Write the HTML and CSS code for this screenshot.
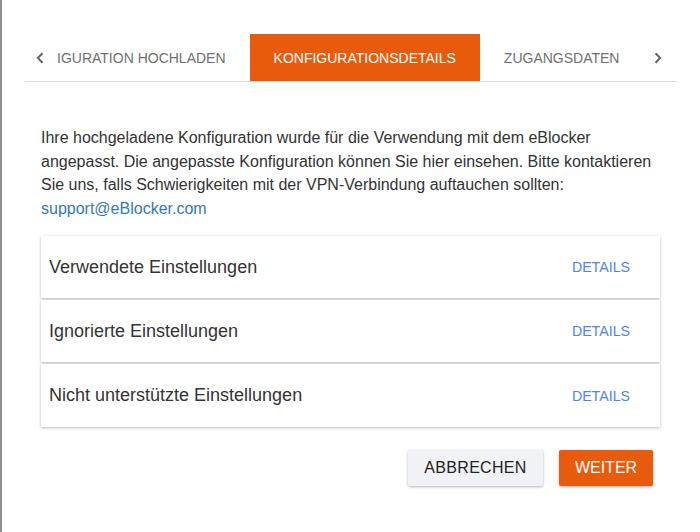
FILE: index.html
```html
<!DOCTYPE html>
<html lang="de">
<head>
<meta charset="utf-8">
<title>Konfigurationsdetails</title>
<link rel="stylesheet" href="styles.css">
</head>
<body>
<div class="dialog">
  <div class="tabs">
    <div class="pager">
      <svg width="10" height="12" viewBox="0 0 10 12"><path d="M7.5 1.2 L2.8 6 L7.5 10.8" fill="none" stroke="#666" stroke-width="2"/></svg>
    </div>
    <div class="tab">IGURATION HOCHLADEN</div>
    <div class="tab active">KONFIGURATIONSDETAILS</div>
    <div class="tab">ZUGANGSDATEN</div>
    <div class="pager next">
      <svg width="10" height="12" viewBox="0 0 10 12"><path d="M2.5 1.2 L7.2 6 L2.5 10.8" fill="none" stroke="#666" stroke-width="2"/></svg>
    </div>
  </div>
  <div class="content">
    <p class="intro">Ihre hochgeladene Konfiguration wurde für die Verwendung mit dem eBlocker angepasst. Die angepasste Konfiguration können Sie hier einsehen. Bitte kontaktieren Sie uns, falls Schwierigkeiten mit der VPN-Verbindung auftauchen sollten: <a class="link" href="#">support@eBlocker.com</a></p>
    <div class="cards">
      <div class="card"><span class="card-title">Verwendete Einstellungen</span><span class="details">DETAILS</span></div>
      <div class="card"><span class="card-title">Ignorierte Einstellungen</span><span class="details">DETAILS</span></div>
      <div class="card card-last"><span class="card-title">Nicht unterstützte Einstellungen</span><span class="details">DETAILS</span></div>
    </div>
    <div class="actions">
      <button class="btn btn-cancel">ABBRECHEN</button>
      <button class="btn btn-next">WEITER</button>
    </div>
  </div>
</div>
</body>
</html>
```
FILE: styles.css
```css
html, body {
  margin: 0;
  padding: 0;
  background: #fff;
}
body {
  width: 700px;
  height: 532px;
  overflow: hidden;
}
.dialog {
  box-sizing: border-box;
  height: 532px;
  border-left: 2px solid #8e8e8e;
  background: #fff;
  padding: 34px 23px 0 23px;
  font-family: "Liberation Sans", Arial, sans-serif;
}
.tabs {
  display: flex;
  height: 47px;
  border-bottom: 1px solid #dcdcdc;
  font-size: 14px;
}
.pager {
  width: 32px;
  display: flex;
  align-items: center;
  padding-left: 10px;
  box-sizing: border-box;
}
.pager.next {
  width: 33px;
  padding-left: 10px;
}
.tab {
  display: flex;
  align-items: center;
  padding: 0 24px 0 0;
  color: #707070;
  white-space: nowrap;
}
.tab.active {
  background: #e95b0c;
  color: #fff;
  padding: 0 24px;
}
.tab.active + .tab {
  padding-left: 24px;
}
.content {
  padding: 0 17px 0 16px;
}
.intro {
  margin: 44px 0 0 0;
  font-size: 16px;
  line-height: 23.5px;
  color: #333;
}
.link {
  color: #337ab7;
  text-decoration: none;
}
.cards {
  margin-top: 16px;
  display: flex;
  flex-direction: column;
  gap: 2px;
}
.card {
  height: 62px;
  display: flex;
  align-items: center;
  justify-content: space-between;
  padding: 0 30px 0 8px;
  background: #fff;
  box-shadow: 0 1px 3px rgba(0,0,0,0.25), 0 0 2px rgba(0,0,0,0.05);
}
.card-last {
  height: 63px;
}
.card-title {
  font-size: 18px;
  color: #333;
}
.details {
  font-size: 14.2px;
  color: #4f83ee;
}
.actions {
  display: flex;
  justify-content: flex-end;
  gap: 16px;
  margin-top: 23px;
  padding-right: 7px;
}
.btn {
  height: 36px;
  border: none;
  border-radius: 2px;
  font-family: "Liberation Sans", Arial, sans-serif;
  font-size: 16px;
  padding: 0;
  box-shadow: 0 1px 3px rgba(0,0,0,0.3);
}
.btn-cancel {
  width: 135px;
  background: #f1f2f6;
  color: #222;
  letter-spacing: 0.3px;
}
.btn-next {
  width: 94px;
  background: #e95b0c;
  color: #fff;
}
```
